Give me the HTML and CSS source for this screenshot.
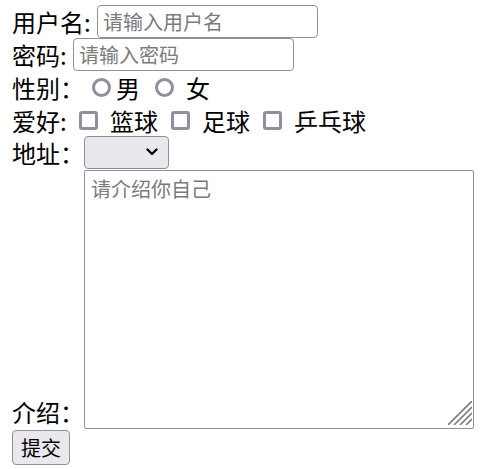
FILE: index.html
```html
<!DOCTYPE html>
<html lang="zh-CN">
<head>
  <meta charset="UTF-8" />
  <meta name="viewport" content="width=device-width, initial-scale=1.0"/>
  <title>注册</title>
  <link rel="stylesheet" href="styles.css">
</head>
<body>
  <form class="reg">
    <div class="row">
      <label class="lbl w-user">用户名:</label>
      <input type="text" class="txt" placeholder="请输入用户名">
    </div>
    <div class="row">
      <label class="lbl w-pwd">密码:</label>
      <input type="password" class="txt" placeholder="请输入密码">
    </div>
    <div class="row">
      <span class="lbl w-sex">性别：</span>
      <input type="radio" name="sex" class="radio">
      <span class="opt">男</span>
      <input type="radio" name="sex" class="radio radio-2">
      <span class="opt">女</span>
    </div>
    <div class="row row-short">
      <span class="lbl w-hobby">爱好:</span>
      <input type="checkbox" class="check">
      <span class="opt">篮球</span>
      <input type="checkbox" class="check">
      <span class="opt">足球</span>
      <input type="checkbox" class="check">
      <span class="opt">乒乓球</span>
    </div>
    <div class="row">
      <span class="lbl w-wide">地址：</span>
      <span class="pick">
        <select class="sel"></select>
        <svg class="chevron" width="12" height="8" viewBox="0 0 12 8">
          <path d="M1.5 1.5 L6 6 L10.5 1.5" fill="none" stroke="#000" stroke-width="2.4" stroke-linecap="round" stroke-linejoin="round"/>
        </svg>
      </span>
    </div>
    <div class="row row-intro">
      <span class="lbl w-wide">介绍：</span>
      <span class="area">
        <textarea class="intro" placeholder="请介绍你自己"></textarea>
        <svg class="grip" width="24" height="24" viewBox="0 0 24 24">
          <path d="M24 0 L0 24 M24 6 L6 24 M24 12 L12 24 M24 18 L18 24" stroke="#7a7a84" stroke-width="1.6"/>
        </svg>
      </span>
    </div>
    <button type="submit" class="submit">提交</button>
  </form>
</body>
</html>
```

FILE: styles.css
```css
* { box-sizing: border-box; }
body {
  margin: 0;
  padding: 5px 12px 0;
  font-family: "Noto Sans CJK SC", sans-serif;
  font-size: 24px;
  color: #000;
  background: #fff;
}
.row {
  display: flex;
  align-items: center;
  height: 33px;
}
.row-short { height: 32px; }
.row-intro { height: 260px; align-items: flex-end; }

.lbl { flex: none; white-space: nowrap; }
.w-user { width: 85px; }
.w-pwd { width: 61px; }
.w-sex { width: 80px; }
.w-hobby { width: 67px; }
.w-wide { width: 72px; }

.txt {
  width: 221px;
  height: 33px;
  margin: 0;
  padding: 0 5px;
  border: 1px solid #8f8f9d;
  border-radius: 4px;
  font-family: inherit;
  font-size: 20px;
  outline: none;
}
.txt::placeholder, .intro::placeholder { color: #7b7b7b; }

.radio, .check {
  appearance: none;
  flex: none;
  width: 19px;
  height: 19px;
  margin: 0;
  border: 3px solid #8f8f9d;
  background: #fff;
}
.radio { border-radius: 50%; margin-right: 5px; }
.radio-2 { margin-left: 15px; margin-right: 12px; }
.check { border-radius: 3px; margin-right: 12px; }
.opt + .check { margin-left: 13px; }

.pick { position: relative; display: block; }
.sel {
  appearance: none;
  display: block;
  width: 85px;
  height: 33px;
  margin: 0;
  border: 1px solid #8f8f9d;
  border-radius: 4px;
  background: #e9e9ed;
  font-family: inherit;
  font-size: 20px;
}
.chevron {
  position: absolute;
  right: 11px;
  top: 12px;
}

.area { position: relative; display: block; }
.intro {
  display: block;
  width: 390px;
  height: 259px;
  margin: 0;
  padding: 3px 6px;
  border: 1px solid #8f8f9d;
  border-radius: 2px;
  font-family: "Noto Sans CJK SC", sans-serif;
  font-size: 20px;
  resize: none;
  outline: none;
}
.grip {
  position: absolute;
  right: 2px;
  bottom: 4px;
}

.submit {
  display: block;
  width: 58px;
  height: 35px;
  margin: 1px 0 0;
  padding: 0;
  border: 1px solid #8f8f9d;
  border-radius: 4px;
  background: #e9e9ed;
  font-family: inherit;
  font-size: 20px;
  color: #000;
}
```
